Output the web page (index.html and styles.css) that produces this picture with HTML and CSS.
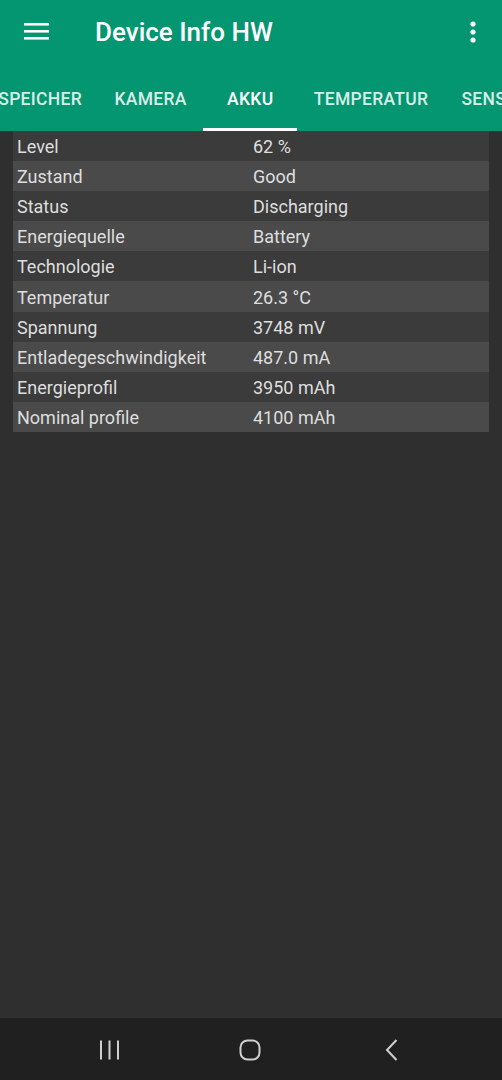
FILE: index.html
```html
<!DOCTYPE html>
<html lang="de">
<head>
<meta charset="utf-8">
<title>Device Info HW</title>
<link rel="stylesheet" href="styles.css">
</head>
<body>
<div class="screen">
  <header class="appbar">
    <div class="toolbar">
      <svg class="menu-icon" width="26" height="18" viewBox="0 0 26 18">
        <rect x="0" y="0" width="25" height="2.6" fill="#fff"/>
        <rect x="0" y="7" width="25" height="2.6" fill="#fff"/>
        <rect x="0" y="14" width="25" height="2.6" fill="#fff"/>
      </svg>
      <h1 class="title">Device Info HW</h1>
      <svg class="more-icon" width="6" height="22" viewBox="0 0 6 22">
        <circle cx="3" cy="3" r="2.6" fill="#fff"/>
        <circle cx="3" cy="11" r="2.6" fill="#fff"/>
        <circle cx="3" cy="19" r="2.6" fill="#fff"/>
      </svg>
    </div>
    <nav class="tabs">
      <div class="tab tab-first">SPEICHER</div>
      <div class="tab">KAMERA</div>
      <div class="tab tab-active">AKKU</div>
      <div class="tab">TEMPERATUR</div>
      <div class="tab">SENSOREN</div>
    </nav>
  </header>
  <main class="content">
    <div class="table">
      <div class="row"><span class="key">Level</span><span class="val">62 %</span></div>
      <div class="row"><span class="key">Zustand</span><span class="val">Good</span></div>
      <div class="row"><span class="key">Status</span><span class="val">Discharging</span></div>
      <div class="row"><span class="key">Energiequelle</span><span class="val">Battery</span></div>
      <div class="row"><span class="key">Technologie</span><span class="val">Li-ion</span></div>
      <div class="row"><span class="key">Temperatur</span><span class="val">26.3 °C</span></div>
      <div class="row"><span class="key">Spannung</span><span class="val">3748 mV</span></div>
      <div class="row"><span class="key">Entladegeschwindigkeit</span><span class="val">487.0 mA</span></div>
      <div class="row"><span class="key">Energieprofil</span><span class="val">3950 mAh</span></div>
      <div class="row"><span class="key">Nominal profile</span><span class="val">4100 mAh</span></div>
    </div>
  </main>
  <footer class="navbar">
    <svg width="22" height="20" viewBox="0 0 22 20" class="nav-recent">
      <rect x="1" y="0.5" width="2" height="19" fill="#cfcfcf"/>
      <rect x="9.5" y="0.5" width="2" height="19" fill="#cfcfcf"/>
      <rect x="18" y="0.5" width="2" height="19" fill="#cfcfcf"/>
    </svg>
    <svg width="22" height="22" viewBox="0 0 22 22" class="nav-home">
      <rect x="1.5" y="1.5" width="19" height="19" rx="7" ry="7" fill="none" stroke="#cfcfcf" stroke-width="2"/>
    </svg>
    <svg width="14" height="22" viewBox="0 0 14 22" class="nav-back">
      <polyline points="11.5,1 2,11 11.5,21" fill="none" stroke="#cfcfcf" stroke-width="2"/>
    </svg>
  </footer>
</div>
</body>
</html>
```

FILE: styles.css
```css
* { box-sizing: border-box; }
html, body {
  margin: 0;
  padding: 0;
  background: #2f2f2f;
}
body {
  font-family: Roboto, "Noto Sans", "Liberation Sans", sans-serif;
}
.screen {
  width: 502px;
  height: 1080px;
  display: flex;
  flex-direction: column;
  overflow: hidden;
}
.appbar {
  background: #039670;
  height: 131px;
  flex: 0 0 auto;
  display: flex;
  flex-direction: column;
}
.toolbar {
  height: 65px;
  display: flex;
  align-items: center;
  padding: 0 0 0 24px;
}
.menu-icon {
  display: block;
  margin-top: -1px;
}
.title {
  margin: 0 0 0 45px;
  font-size: 26px;
  font-weight: 500;
  color: #fff;
  flex: 1 1 auto;
  letter-spacing: 0;
  margin-top: -1px;
}
.more-icon {
  display: block;
  margin-right: 26px;
  margin-top: -1px;
}
.tabs {
  height: 66px;
  display: flex;
  align-items: stretch;
  white-space: nowrap;
  overflow: hidden;
}
.tab {
  flex: 0 0 auto;
  min-width: 94px;
  padding: 4px 16.5px 0;
  display: flex;
  align-items: center;
  justify-content: center;
  font-size: 17.5px;
  font-weight: 500;
  letter-spacing: 0.3px;
  color: rgba(255, 255, 255, 0.86);
  border-bottom: 3px solid transparent;
}
.tab-first {
  width: 98px;
  min-width: 98px;
  justify-content: flex-end;
  padding-right: 16px;
  padding-left: 0;
}
.tab-active {
  color: #fff;
  border-bottom-color: #fff;
}
.content {
  flex: 1 1 auto;
  background: #2f2f2f;
  padding: 0 13px;
}
.table {
  display: flex;
  flex-direction: column;
}
.row {
  height: 30.1px;
  display: flex;
  align-items: center;
  background: #3b3b3b;
  color: #dedede;
  font-size: 18px;
  padding: 1px 0 0 4px;
}
.row:nth-child(even) {
  background: #4a4a4a;
}
.key {
  width: 236px;
  flex: 0 0 auto;
}
.val {
  flex: 1 1 auto;
}
.navbar {
  height: 62px;
  flex: 0 0 auto;
  background: #202020;
  display: flex;
  align-items: center;
  padding-top: 1px;
}
.nav-recent {
  display: block;
  margin-left: 99px;
}
.nav-home {
  display: block;
  margin-left: 118px;
}
.nav-back {
  display: block;
  margin-left: 124px;
}
```
